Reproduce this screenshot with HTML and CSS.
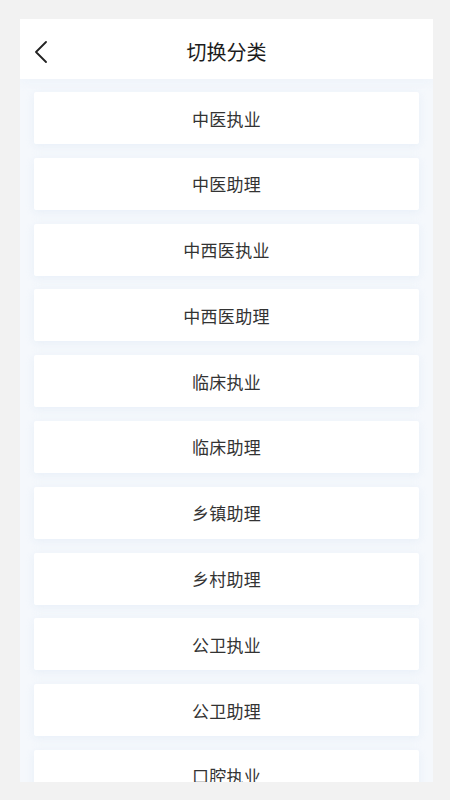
FILE: index.html
```html
<!DOCTYPE html>
<html lang="zh">
<head>
<meta charset="utf-8">
<title>切换分类</title>
<link rel="stylesheet" href="styles.css">
</head>
<body>
<div class="panel">
  <header class="header">
    <svg class="back" width="16" height="22" viewBox="0 0 16 22"><path d="M13 1 L3 11 L13 21" fill="none" stroke="#222" stroke-width="1.8" stroke-linecap="round" stroke-linejoin="round"/></svg>
    <h1 class="title">切换分类</h1>
  </header>
  <main class="list">
    <div class="item">中医执业</div>
    <div class="item">中医助理</div>
    <div class="item">中西医执业</div>
    <div class="item">中西医助理</div>
    <div class="item">临床执业</div>
    <div class="item">临床助理</div>
    <div class="item">乡镇助理</div>
    <div class="item">乡村助理</div>
    <div class="item">公卫执业</div>
    <div class="item">公卫助理</div>
    <div class="item">口腔执业</div>
  </main>
</div>
</body>
</html>
```

FILE: styles.css
```css
html, body {
  margin: 0;
  padding: 0;
  background: #f2f2f2;
}
body {
  padding: 19px 17px 0 20px;
  height: 800px;
  box-sizing: border-box;
  font-family: "Noto Sans CJK SC", "Noto Sans", sans-serif;
}
.panel {
  height: 763px;
  background: #f5f8fc;
  overflow: hidden;
  display: flex;
  flex-direction: column;
}
.header {
  position: relative;
  height: 60px;
  flex: none;
  background: #fff;
  display: flex;
  align-items: center;
  justify-content: center;
  box-shadow: 0 4px 8px rgba(235, 242, 250, 0.6);
}
.back {
  position: absolute;
  left: 13px;
  top: 22px;
}
.title {
  margin: 0;
  font-size: 20px;
  font-weight: 400;
  color: #1c1c1c;
  line-height: 1;
  padding-top: 6px;
}
.list {
  padding: 13px 14px 0 14px;
  display: flex;
  flex-direction: column;
  gap: 13.8px;
}
.item {
  flex: none;
  height: 52px;
  background: #fff;
  border-radius: 2px;
  box-shadow: 0 2px 8px rgba(215, 228, 245, 0.45);
  display: flex;
  align-items: center;
  justify-content: center;
  font-size: 17px;
  color: #333;
  letter-spacing: 0.3px;
}
```
